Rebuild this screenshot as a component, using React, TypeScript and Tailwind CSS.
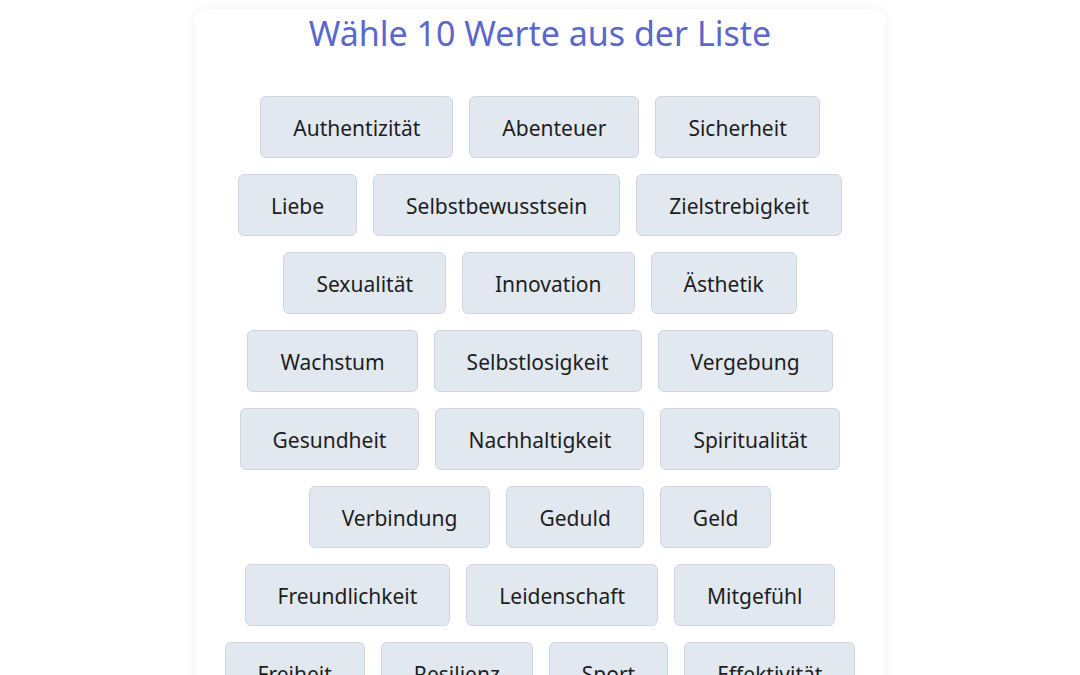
import React from "react";

const values = [
  "Authentizität", "Abenteuer", "Sicherheit",
  "Liebe", "Selbstbewusstsein", "Zielstrebigkeit",
  "Sexualität", "Innovation", "Ästhetik",
  "Wachstum", "Selbstlosigkeit", "Vergebung",
  "Gesundheit", "Nachhaltigkeit", "Spiritualität",
  "Verbindung", "Geduld", "Geld",
  "Freundlichkeit", "Leidenschaft", "Mitgefühl",
  "Freiheit", "Resilienz", "Sport", "Effektivität",
  "Familie", "Humor", "Kreativität", "Ehrlichkeit",
  "Respekt", "Gerechtigkeit", "Dankbarkeit",
];

export default function App() {
  return (
    <div
      className="min-h-[675px] bg-white"
      style={{ fontFamily: '"Noto Sans", "Open Sans", sans-serif' }}
    >
      <div className="mx-auto mt-[9px] w-[690px] rounded-xl bg-white px-6 pb-8 shadow-[0_0_14px_rgba(0,0,0,0.06)]">
        <h1 className="text-center text-[34px] leading-[48px] text-[#5b67cb]">
          Wähle 10 Werte aus der Liste
        </h1>
        <div className="mt-[39px] flex flex-wrap justify-center gap-4">
          {values.map((v) => (
            <button
              key={v}
              className="rounded-md border border-[#cfd6e0] bg-[#e2e8f0] px-8 pt-[17px] pb-[15px] text-[21px] leading-[28px] text-[#1d1e20]"
            >
              {v}
            </button>
          ))}
        </div>
      </div>
    </div>
  );
}
